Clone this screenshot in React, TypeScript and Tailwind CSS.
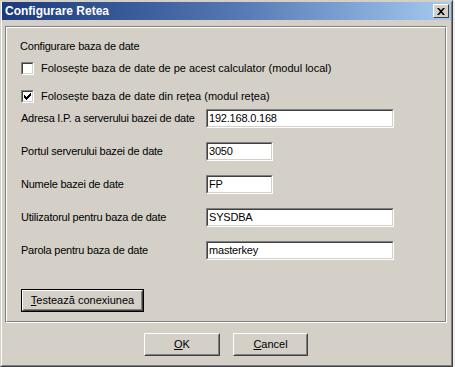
import React from "react";

const font = { fontFamily: '"Liberation Sans", Arial, sans-serif' };

function Sunken({ w, value }: { w: number; value: string }) {
  return (
    <div
      className="h-[19px] border border-t-[#808080] border-l-[#808080] border-r-white border-b-white"
      style={{ width: w }}
    >
      <div className="h-full w-full bg-white border border-t-[#404040] border-l-[#404040] border-r-[#d4d0c8] border-b-[#d4d0c8] pl-[1px] flex items-center text-[11px] leading-none text-black tracking-[-0.2px]">
        {value}
      </div>
    </div>
  );
}

function Check({ checked }: { checked: boolean }) {
  return (
    <div className="w-[13px] h-[13px] border border-t-[#808080] border-l-[#808080] border-r-white border-b-white">
      <div className="w-full h-full bg-white border border-t-[#404040] border-l-[#404040] border-r-[#d4d0c8] border-b-[#d4d0c8] flex items-center justify-center">
        {checked && (
          <svg width="7" height="7" viewBox="0 0 7 7">
            <path d="M0 2h1v1h1v1h1v-1h1v-1h1v-1h1v-1h1v3h-1v1h-1v1h-1v1h-1v1h-1v-1h-1v-1h-1z" fill="#000" />
          </svg>
        )}
      </div>
    </div>
  );
}

function Button({
  w,
  children,
  def,
}: {
  w: number;
  children: React.ReactNode;
  def?: boolean;
}) {
  const inner = (
    <div className="h-full w-full border border-t-white border-l-white border-r-[#404040] border-b-[#404040]">
      <div className="h-full w-full border border-t-[#d4d0c8] border-l-[#d4d0c8] border-r-[#808080] border-b-[#808080] flex items-center justify-center text-[11px] leading-none text-black">
        {children}
      </div>
    </div>
  );
  return (
    <div className={`h-[23px] ${def ? "border border-black" : ""}`} style={{ width: w }}>
      {inner}
    </div>
  );
}

function Row({ label, w, value }: { label: string; w: number; value: string }) {
  return (
    <div className="flex items-center h-[19px]">
      <div className="w-[186px] pl-[1px] text-[11px] leading-none tracking-[-0.22px]">{label}</div>
      <Sunken w={w} value={value} />
    </div>
  );
}

export default function App() {
  return (
    <div className="w-[455px] h-[367px] bg-[#eeeeee] flex" style={font}>
      <div className="w-[453px] h-[367px] border border-t-[#d4d0c8] border-l-[#d4d0c8] border-r-[#404040] border-b-[#404040]">
        <div className="w-full h-full bg-[#d4d0c8] border-l border-t border-l-white border-t-[#d4d0c8] border-r border-b border-r-[#808080] border-b-[#808080] flex flex-col">
          <div className="h-[18px] flex items-center justify-between bg-gradient-to-r from-[#1c3a7c] via-[#5274b0] to-[#a6caf0] pl-[3px] pr-[2px]">
            <span className="text-white font-bold text-[12px] leading-none">Configurare Retea</span>
            <div className="w-[16px] h-[14px] border border-t-white border-l-white border-r-[#404040] border-b-[#404040] bg-[#d4d0c8] flex items-center justify-center">
              <svg width="8" height="7" viewBox="0 0 8 7">
                <path d="M0 0h2l2 2.3 2-2.3h2l-3 3.5 3 3.5h-2l-2-2.3-2 2.3h-2l3-3.5z" fill="#000" />
              </svg>
            </div>
          </div>
          <div className="ml-[3px] mt-[6px] w-[442px] h-[297px] border border-t-[#808080] border-l-[#808080] border-r-white border-b-white">
            <div className="w-full h-full border border-t-white border-l-white border-r-[#808080] border-b-[#808080] pl-[13px] pt-[12px] flex flex-col text-black">
              <div className="h-[13px] text-[11px] leading-[13px] tracking-[-0.2px]">Configurare baza de date</div>
              <div className="mt-[9px] flex items-center h-[13px] pl-[1px]">
                <Check checked={false} />
                <span className="ml-[7px] text-[11px] leading-none">
                  Folosește baza de date de pe acest calculator (modul local)
                </span>
              </div>
              <div className="mt-[15px] flex items-center h-[13px] pl-[1px]">
                <Check checked={true} />
                <span className="ml-[7px] text-[11px] leading-none">
                  Folosește baza de date din rețea (modul rețea)
                </span>
              </div>
              <div className="mt-[6px] flex flex-col gap-[14px]">
                <Row label="Adresa I.P. a serverului bazei de date" w={188} value="192.168.0.168" />
                <Row label="Portul serverului bazei de date" w={67} value="3050" />
                <Row label="Numele bazei de date" w={67} value="FP" />
                <Row label="Utilizatorul pentru baza de date" w={188} value="SYSDBA" />
                <Row label="Parola pentru baza de date" w={188} value="masterkey" />
              </div>
              <div className="mt-[29px] pl-[1px]">
                <Button w={123} def>
                  <span>
                    <span className="underline">T</span>estează conexiunea
                  </span>
                </Button>
              </div>
            </div>
          </div>
          <div className="mt-[10px] flex pl-[142px] gap-[13px]">
            <Button w={76}>
              <span>
                <span className="underline">O</span>K
              </span>
            </Button>
            <Button w={75}>
              <span>
                <span className="underline">C</span>ancel
              </span>
            </Button>
          </div>
        </div>
      </div>
    </div>
  );
}
